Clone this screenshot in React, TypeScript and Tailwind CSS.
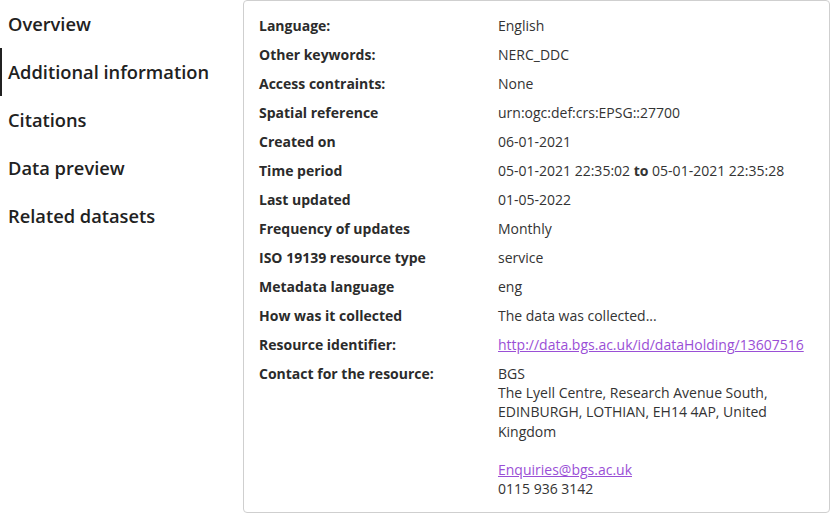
import React from "react";

const rows: { label: string; value: React.ReactNode }[] = [
  { label: "Language:", value: "English" },
  { label: "Other keywords:", value: "NERC_DDC" },
  { label: "Access contraints:", value: "None" },
  { label: "Spatial reference", value: "urn:ogc:def:crs:EPSG::27700" },
  { label: "Created on", value: "06-01-2021" },
  {
    label: "Time period",
    value: (
      <>
        05-01-2021 22:35:02 <span className="font-bold">to</span> 05-01-2021 22:35:28
      </>
    ),
  },
  { label: "Last updated", value: "01-05-2022" },
  { label: "Frequency of updates", value: "Monthly" },
  { label: "ISO 19139 resource type", value: "service" },
  { label: "Metadata language", value: "eng" },
  { label: "How was it collected", value: "The data was collected..." },
  {
    label: "Resource identifier:",
    value: (
      <a href="#" className="text-[#9a4fd6] underline">
        http://data.bgs.ac.uk/id/dataHolding/13607516
      </a>
    ),
  },
  {
    label: "Contact for the resource:",
    value: (
      <div>
        <div>BGS</div>
        <div>The Lyell Centre, Research Avenue South, EDINBURGH, LOTHIAN, EH14 4AP, United Kingdom</div>
        <div className="h-[19.2px]" />
        <div>
          <a href="#" className="text-[#9a4fd6] underline">
            Enquiries@bgs.ac.uk
          </a>
        </div>
        <div>0115 936 3142</div>
      </div>
    ),
  },
];

const nav = ["Overview", "Additional information", "Citations", "Data preview", "Related datasets"];

export default function App() {
  return (
    <div
      className="flex w-[831px] h-[513px] bg-white text-[#212121] overflow-hidden"
      style={{ fontFamily: '"Open Sans", sans-serif' }}
    >
      <nav className="w-[243px] shrink-0 flex flex-col">
        {nav.map((n, i) => (
          <div
            key={n}
            className={
              "h-12 flex items-center pl-[6px] border-l-2 text-[18.3px] font-semibold " +
              (i === 1 ? "border-[#212121]" : "border-transparent")
            }
          >
            {n}
          </div>
        ))}
      </nav>
      <div className="w-[587px] h-[513px] border border-[#cfcfcf] rounded-[4px] pt-[15px] pl-[15px] pr-4 text-[14px] leading-[19.2px] text-[#333]">
        {rows.map((r) => (
          <div key={r.label} className="flex pb-[9.8px]">
            <div className="w-[239px] shrink-0 font-bold text-[#2b2b2b]">{r.label}</div>
            <div className="flex-1">{r.value}</div>
          </div>
        ))}
      </div>
    </div>
  );
}
